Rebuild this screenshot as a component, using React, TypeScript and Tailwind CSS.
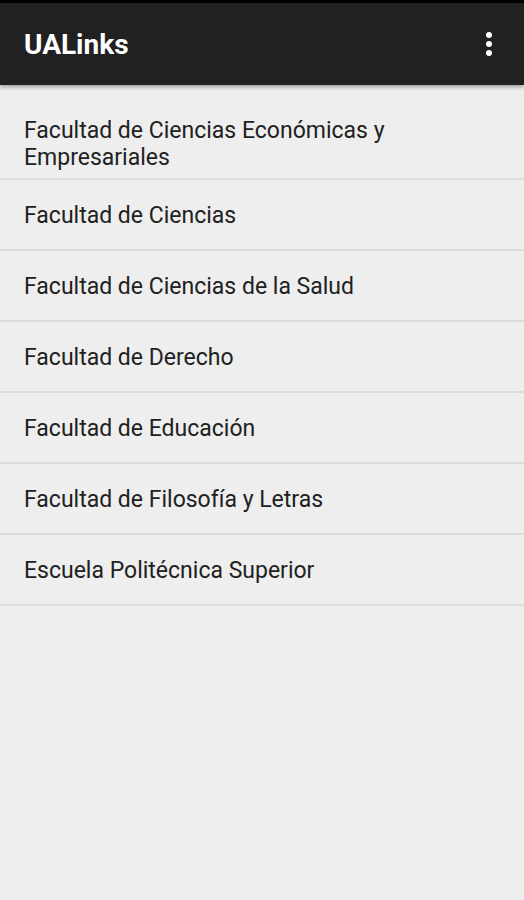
const faculties = [
  "Facultad de Ciencias",
  "Facultad de Ciencias de la Salud",
  "Facultad de Derecho",
  "Facultad de Educación",
  "Facultad de Filosofía y Letras",
  "Escuela Politécnica Superior",
];

const MoreIcon = () => (
  <svg width="8" height="26" viewBox="0 0 8 26" fill="white">
    <circle cx="4" cy="4" r="3" />
    <circle cx="4" cy="13" r="3" />
    <circle cx="4" cy="22" r="3" />
  </svg>
);

export default function App() {
  return (
    <div className="w-[524px] h-[900px] bg-[#eeeeee] font-['Roboto',sans-serif] overflow-hidden">
      <div className="relative z-10 border-t-[3px] border-black bg-[#212121] h-[85px] flex items-center justify-between pl-6 pr-[31px] shadow-[0_2px_4px_rgba(0,0,0,0.35)]">
        <h1 className="text-white text-[28px] font-bold pt-[2px]">UALinks</h1>
        <MoreIcon />
      </div>

      <ul className="text-[#212121] text-[23px] leading-[27px]">
        <li className="pl-6 pr-4 pt-[32px] pb-[7px] border-b-2 border-[#dcdcdc]">
          Facultad de Ciencias Económicas y Empresariales
        </li>
        {faculties.map((name) => (
          <li key={name} className="pl-6 pr-4 pt-[22px] pb-[20px] border-b-2 border-[#dcdcdc]">
            {name}
          </li>
        ))}
      </ul>
    </div>
  );
}
